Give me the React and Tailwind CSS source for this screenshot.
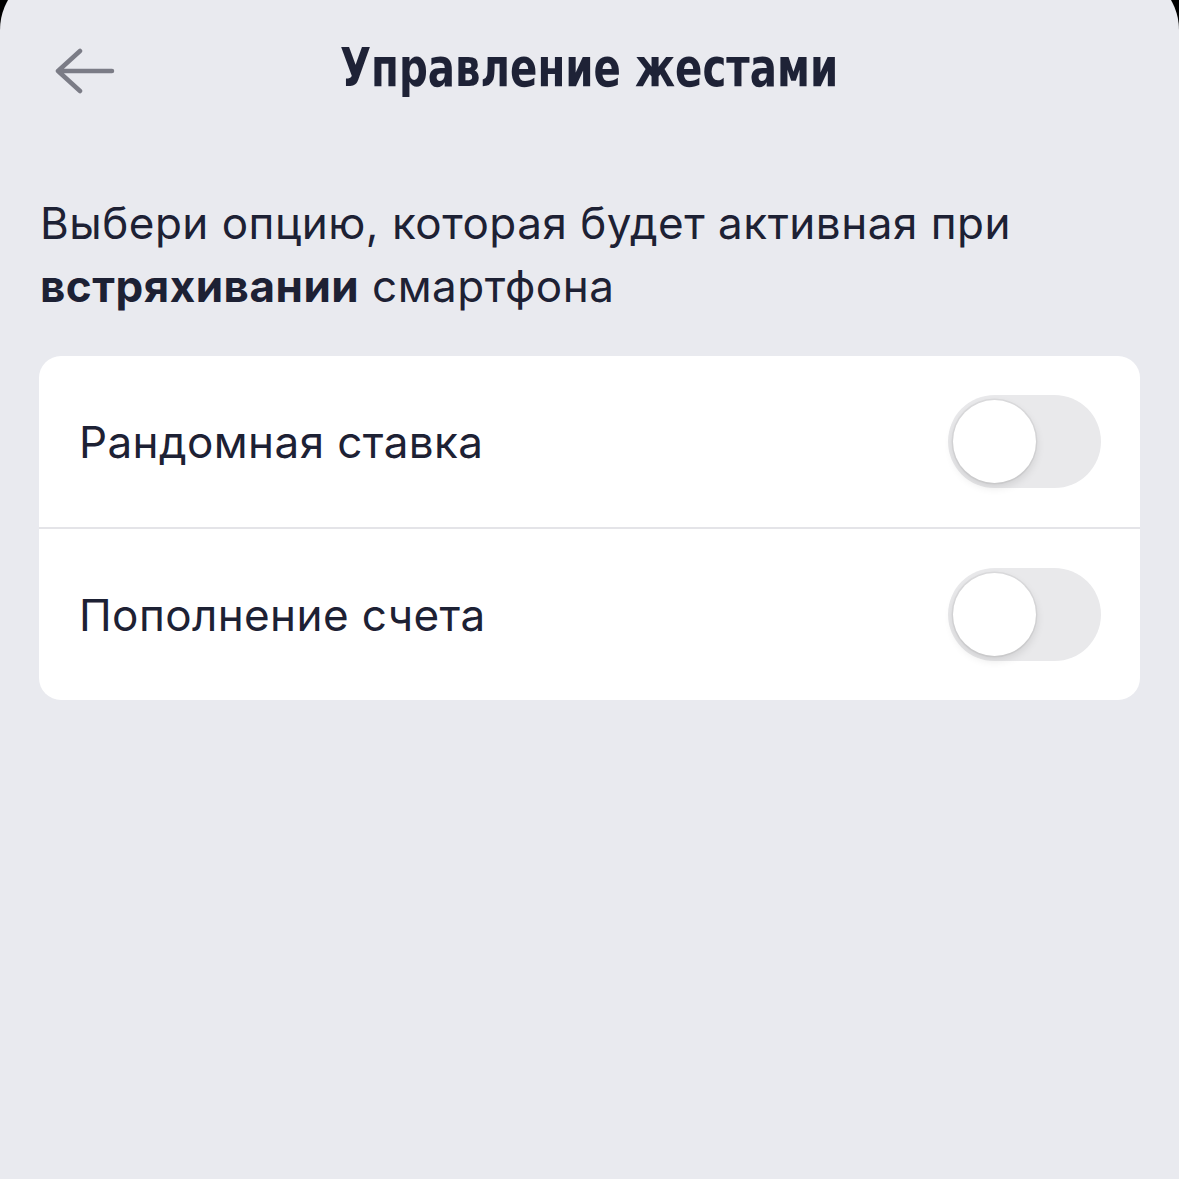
import React, { useState } from 'react';

function BackArrow() {
  return (
    <svg width="60" height="46" viewBox="0 0 60 46" fill="none">
      <path d="M3 23 H57 M25 3 L3 23 L25 43" stroke="#7b7c86" strokeWidth="4.5" strokeLinecap="round" strokeLinejoin="round" />
    </svg>
  );
}

function Toggle({ on, onChange }) {
  return (
    <button
      onClick={() => onChange(!on)}
      className={`relative w-[153px] h-[93px] rounded-full shrink-0 ${on ? 'bg-[#34c759]' : 'bg-[#e9e9eb]'}`}
    >
      <span
        className={`absolute top-[5px] w-[83px] h-[83px] rounded-full bg-white shadow-[0_4px_10px_rgba(0,0,0,0.12),0_0_0_1.5px_rgba(0,0,0,0.05)] ${on ? 'left-[65px]' : 'left-[5px]'}`}
      />
    </button>
  );
}

function Row({ label, on, onChange }) {
  return (
    <div className="flex items-center justify-between h-[171px] pl-[40px] pr-[39px]">
      <span className="text-[44px] leading-none tracking-[0.4px] text-[#1d2134]">{label}</span>
      <Toggle on={on} onChange={onChange} />
    </div>
  );
}

export default function App() {
  const [random, setRandom] = useState(false);
  const [deposit, setDeposit] = useState(false);

  return (
    <div className="w-full h-[1179px] overflow-hidden bg-black" style={{ fontFamily: 'Inter, "Noto Sans", sans-serif' }}>
      <div className="mt-[-30px] h-[1209px] pt-[30px] rounded-t-[60px] bg-[#e9eaef]">
        {/* header */}
        <div className="relative flex items-center justify-center h-[136px]">
          <button className="absolute left-[55px] top-[48px]">
            <BackArrow />
          </button>
          <h1
            className="inline-block scale-x-[0.83] text-[54px] font-bold text-[#1e2236] leading-none"
            style={{ fontFamily: '"Liberation Sans Narrow", "DejaVu Sans Condensed", "Roboto Condensed", sans-serif' }}
          >
            Управление жестами
          </h1>
        </div>

        <p className="mt-[56px] px-[40px] text-[44px] leading-[63px] tracking-[0.5px] text-[#1d2134]">
          Выбери опцию, которая будет активная при <b className="font-bold">встряхивании</b> смартфона
        </p>

        <div className="mt-[38px] mx-[39px] bg-white rounded-[22px] overflow-hidden">
          <Row label="Рандомная ставка" on={random} onChange={setRandom} />
          <div className="h-[2px] bg-[#e4e4e8]" />
          <Row label="Пополнение счета" on={deposit} onChange={setDeposit} />
        </div>
      </div>
    </div>
  );
}
